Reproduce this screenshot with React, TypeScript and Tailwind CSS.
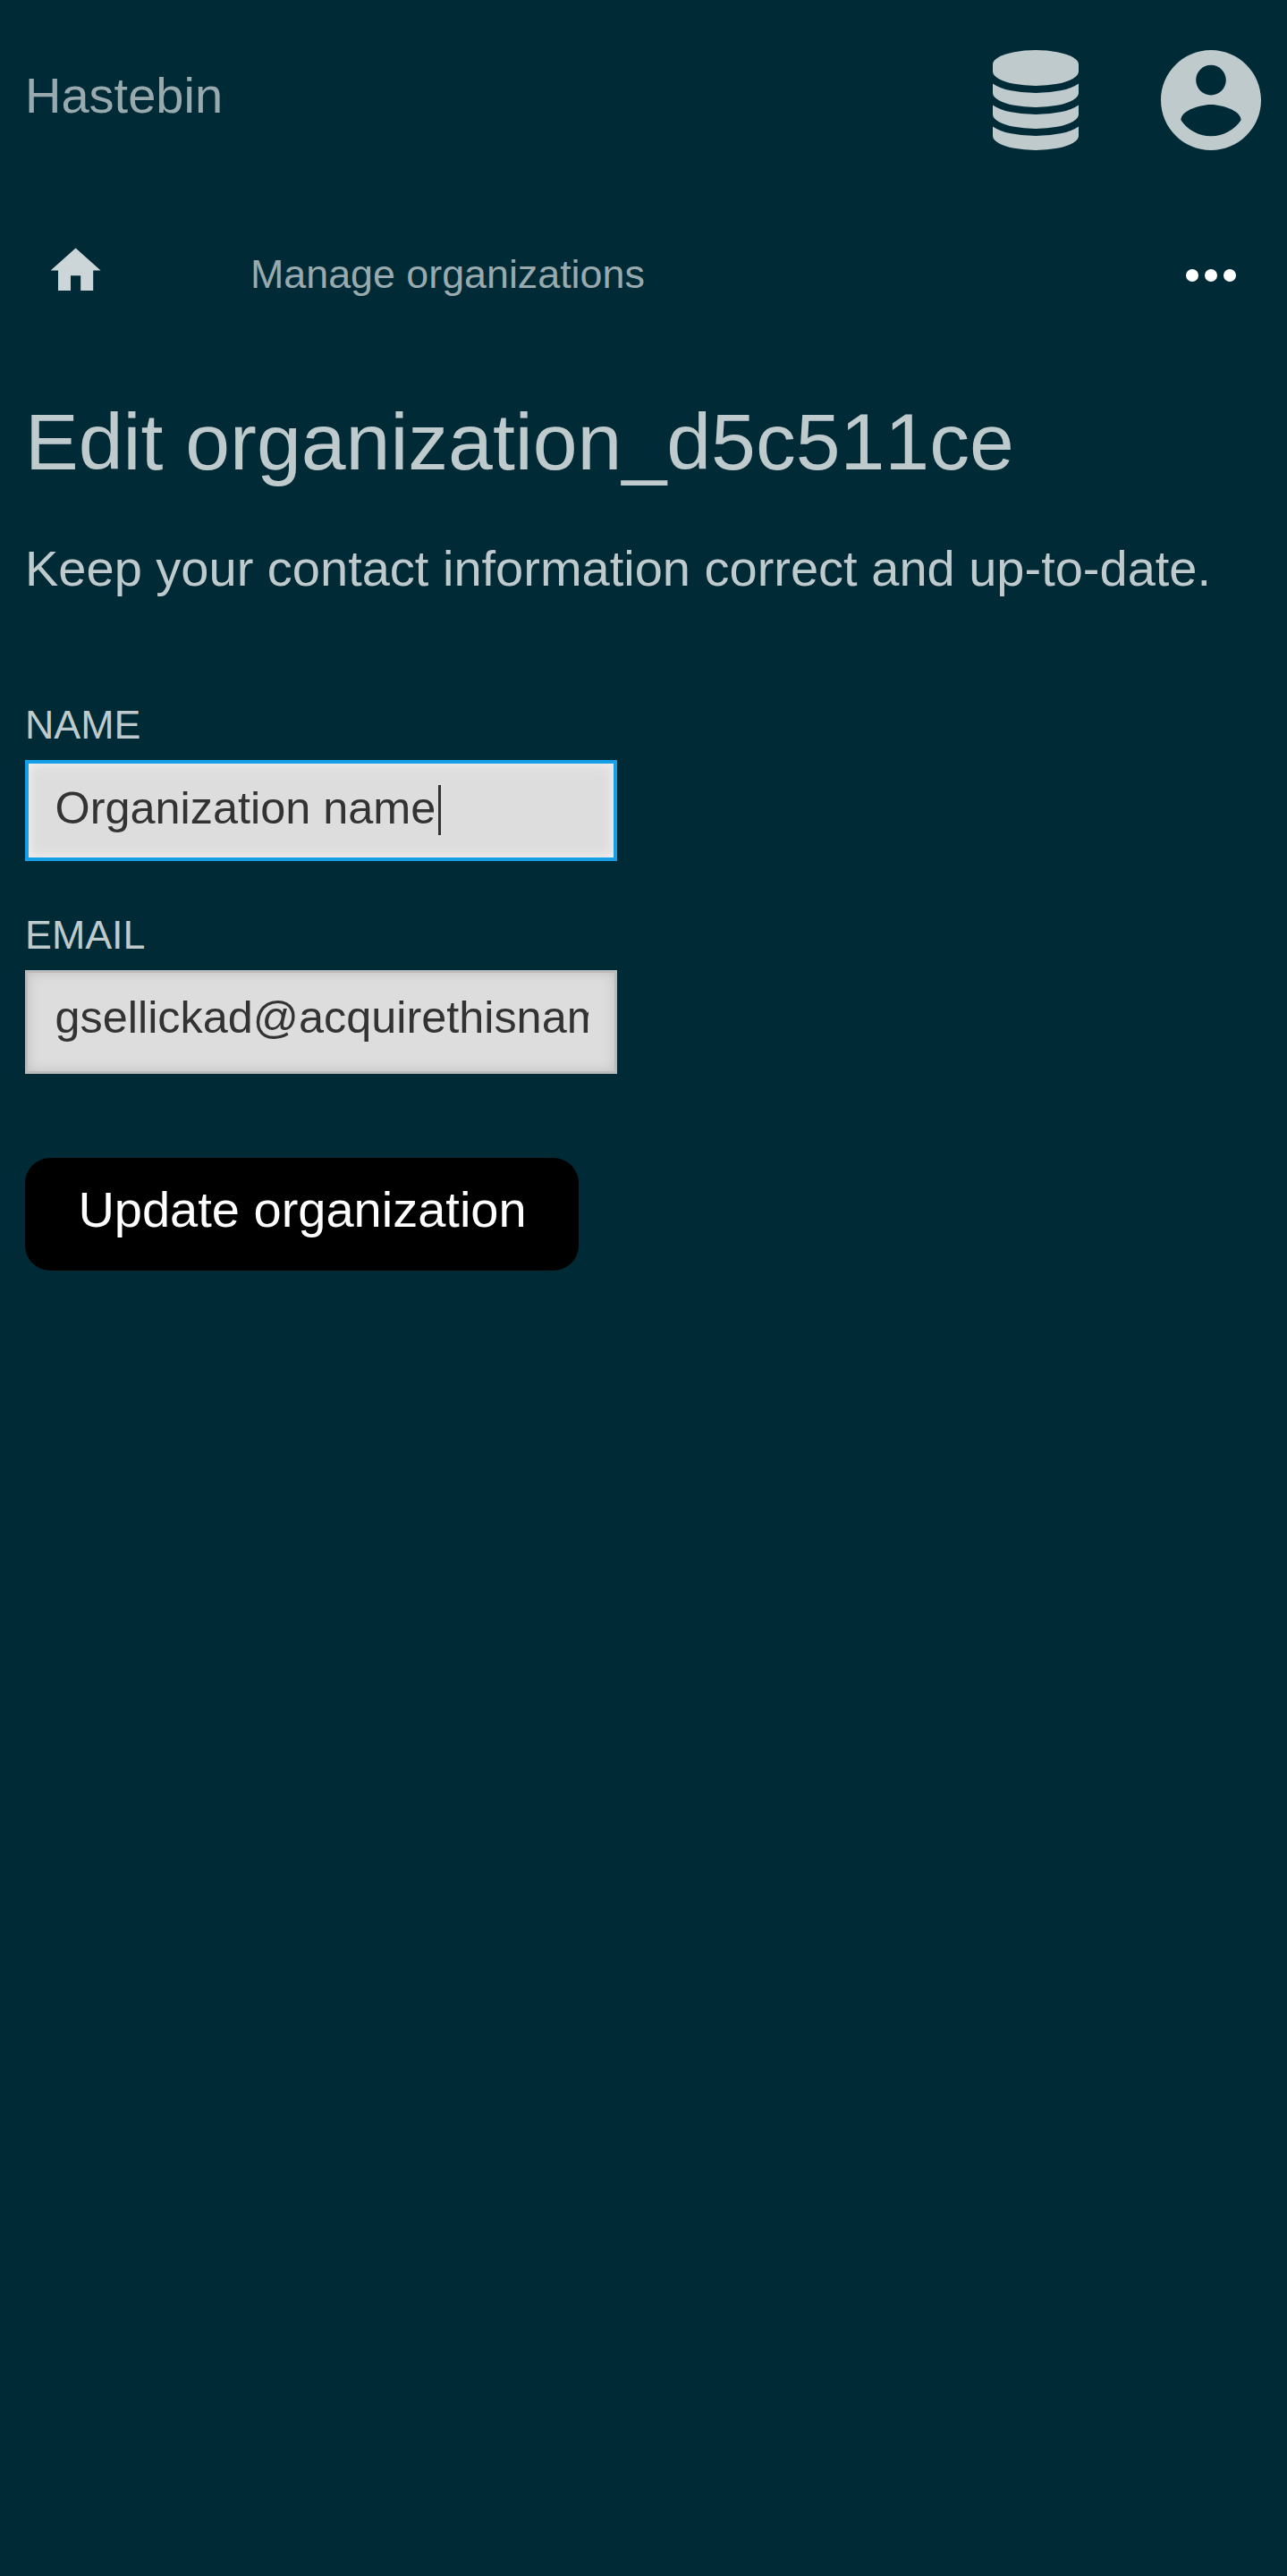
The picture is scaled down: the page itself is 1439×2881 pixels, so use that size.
import React from 'react';

const discLayer =
  'q237 0 443-43t325-127v170q0 69-103 128t-280 93.5-385 34.5-385-34.5-280-93.5-103-128v-170q119 84 325 127t443 43z';

function DatabaseIcon() {
  return (
    <svg className="h-28 w-28 fill-[#bfcacd]" viewBox="0 0 1792 1792" aria-hidden="true">
      <path d={`M896 768${discLayer}`} />
      <path d={`M896 1152${discLayer}`} />
      <path d={`M896 1536${discLayer}`} />
      <path d="M896 0q208 0 385 34.5t280 93.5 103 128v128q0 69-103 128t-280 93.5-385 34.5-385-34.5-280-93.5-103-128V256q0-69 103-128t280-93.5T896 0z" />
    </svg>
  );
}

function AccountIcon() {
  return (
    <svg className="h-28 w-28 fill-[#bfcacd]" viewBox="2 2 20 20" aria-hidden="true">
      <path d="M12 2C6.48 2 2 6.48 2 12s4.48 10 10 10 10-4.48 10-10S17.52 2 12 2zm0 3c1.66 0 3 1.34 3 3s-1.34 3-3 3-3-1.34-3-3 1.34-3 3-3zm0 14.2c-2.5 0-4.71-1.28-6-3.22.03-1.99 4-3.08 6-3.08 1.99 0 5.97 1.09 6 3.08-1.29 1.94-3.5 3.22-6 3.22z" />
    </svg>
  );
}

function HomeIcon() {
  return (
    <svg className="mt-[45px] h-[67.2px] w-[67.2px] fill-[#ccd5d7]" viewBox="0 0 24 24" aria-hidden="true">
      <path d="M10 20v-6h4v6h5v-8h3L12 3 2 12h3v8z" />
    </svg>
  );
}

function MoreIcon() {
  return (
    <svg className="mt-[77px] h-[14px] w-14 fill-white" viewBox="0 0 56 14" aria-hidden="true">
      <circle cx="7" cy="7" r="7" />
      <circle cx="28" cy="7" r="7" />
      <circle cx="49" cy="7" r="7" />
    </svg>
  );
}

export default function App() {
  return (
    <div className="min-h-[2881px] bg-[#002b36] font-['Liberation_Sans',Arial,sans-serif] text-[#bfcacd]">
      <header className="flex h-56 items-center justify-between pl-7 pr-[29px]">
        <div className="mb-[11px] text-[56px] leading-[84px] text-[#99aaaf]">Hastebin</div>
        <div className="flex gap-[84px]">
          <DatabaseIcon />
          <AccountIcon />
        </div>
      </header>

      <nav className="flex h-[168px] items-start pl-[51px] pr-[57px]">
        <HomeIcon />
        <a className="ml-[161.8px] mt-[52px] text-[44.8px] leading-[60px] text-[#99aaaf]">Manage organizations</a>
        <div className="ml-auto">
          <MoreIcon />
        </div>
      </nav>

      <main className="px-7">
        <h1 className="mt-[52px] text-[89.6px] leading-[100px] [font-kerning:none]">Edit organization_d5c511ce</h1>
        <p className="mt-[50px] text-[56px] leading-[84px]">Keep your contact information correct and up-to-date.</p>

        <form className="mt-[102px]">
          <label className="block text-[44.8px] leading-[60px]">NAME</label>
          <div className="mt-[10px] flex h-[113px] w-[662px] items-start border-4 border-[#169fe6] bg-[#ddd] px-[29.5px] pt-[20px] text-[50.4px] leading-[60px] text-[#333] shadow-[inset_0_0_14px_#f4f4f4]">
            <span>Organization name</span>
            <span className="ml-[3px] mt-1 h-14 w-[3px] bg-[#333]" />
          </div>

          <label className="mt-[52px] block text-[44.8px] leading-[60px]">EMAIL</label>
          <div className="mt-[10px] h-[116px] w-[662px] border-[3px] border-[#bbb] bg-[#ddd] px-[29px] pt-[20px] text-[50.4px] leading-[60px] text-[#333] shadow-[inset_0_0_14px_#c0c0c0]">
            <div className="overflow-hidden whitespace-nowrap pl-[1.5px]">gsellickad@acquirethisname.com</div>
          </div>

          <button type="button" className="mt-[94px] block h-[126px] w-[619px] rounded-[28px] bg-black pb-[11px] pl-[1px] text-[56px] leading-[84px] text-white">
            Update organization
          </button>
        </form>
      </main>
    </div>
  );
}
